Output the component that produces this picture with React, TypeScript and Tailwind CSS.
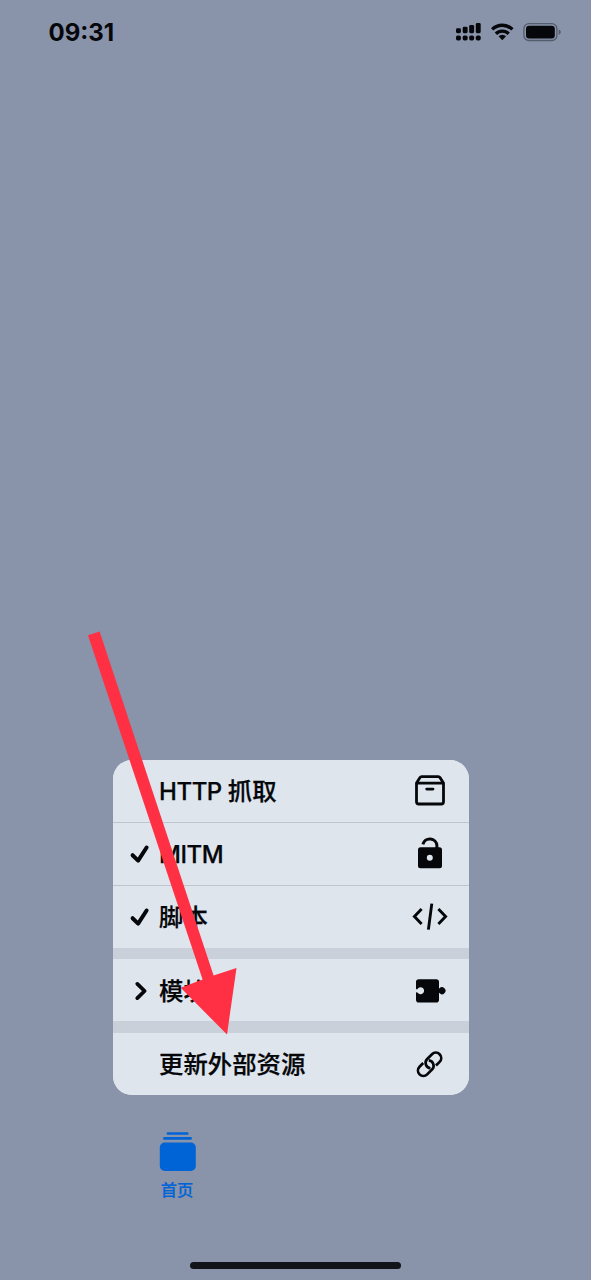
import type { ReactNode } from "react";

const BoxIcon = () => (
  <svg className="size-10" viewBox="0 0 40 40" fill="none" stroke="#05070a" strokeWidth="2.8" strokeLinejoin="round" strokeLinecap="round">
    <path d="M6.5 12.1 10 6.6Q10.6 5.7 11.6 5.7H28.4Q29.4 5.7 30 6.6L33.5 12.1V30.8Q33.5 33 31.3 33H8.7Q6.5 33 6.5 30.8ZM6.5 12.1H33.5" />
    <path d="M16.7 18.1H23" />
  </svg>
);

const LockIcon = () => (
  <svg className="size-10" viewBox="0 0 40 40">
    <path d="M12.9 10.4A7.1 7.1 0 0 1 26.9 11.6V15" fill="none" stroke="#05070a" strokeWidth="3" />
    <path fill="#05070a" fillRule="evenodd" d="M10.5 13.3H29.5Q32 13.3 32 15.8V31.7Q32 34.2 29.5 34.2H10.5Q8 34.2 8 31.7V15.8Q8 13.3 10.5 13.3ZM19.8 20.7A3 3 0 1 0 19.8 26.7A3 3 0 1 0 19.8 20.7Z" />
  </svg>
);

const CodeIcon = () => (
  <svg className="size-10" viewBox="0 0 40 40" fill="none" stroke="#05070a" strokeWidth="2.9">
    <path d="M11.6 12 4.4 19.5 11.6 27M28.4 12 35.6 19.5 28.4 27M21.8 6.6 18.4 32.6" />
  </svg>
);

const PuzzleIcon = () => (
  <svg className="size-10" viewBox="0 0 40 40" fill="#05070a">
    <path d="M8.8 8.2H26.2Q29 8.2 29 11V17.6Q29.2 17.8 29.4 17.3A3.5 3.5 0 1 1 29.4 22.1Q29.2 21.6 29 21.8V28.7Q29 31.5 26.2 31.5H8.8Q6 31.5 6 28.7V21.5Q6.4 20.8 7.7 21.7A3.5 3.5 0 1 0 7.7 17.7Q6.4 18.6 6 17.9V11Q6 8.2 8.8 8.2Z" />
  </svg>
);

const LinkIcon = () => (
  <svg className="size-10" viewBox="0 0 40 40" fill="none" stroke="#05070a" strokeWidth="2.7">
    <g transform="translate(19.6 20.3) rotate(-45)">
      <path d="M3.6 5.4H8.8A5.4 5.4 0 0 0 8.8-5.4H2A5.4 5.4 0 0 0-2.2 3.4" />
      <path d="M-3.6-5.4H-8.8A5.4 5.4 0 0 0-8.8 5.4H-2A5.4 5.4 0 0 0 2.2-3.4" />
    </g>
  </svg>
);

const Check = () => (
  <svg className="size-6" viewBox="0 0 24 24" fill="none" stroke="#05070a" strokeWidth="4" strokeLinecap="round" strokeLinejoin="round">
    <path d="M4.6 13.2 10.1 18.6 18.6 5.5" />
  </svg>
);

const Chevron = () => (
  <svg className="size-6" viewBox="0 0 24 24" fill="none" stroke="#05070a" strokeWidth="3.8" strokeLinecap="round" strokeLinejoin="round">
    <path d="M9.3 4.9 16.6 12 9.3 19.1" />
  </svg>
);

function Row({ label, latin, mark, icon }: { label?: string; latin?: string; mark?: ReactNode; icon: ReactNode }) {
  return (
    <div className="flex h-[62px] shrink-0 items-center bg-[#dfe5ed] pr-[19px] pl-[15px] text-[24.4px] font-medium text-[#05070a]">
      <span className="flex w-[31px] shrink-0">{mark}</span>
      <span className="flex-1 leading-[34px] whitespace-pre [-webkit-text-stroke:0.25px_#05070a]">
        {latin && <span className="text-[24px] tracking-[-0.45px]">{latin}</span>}
        {label}
      </span>
      {icon}
    </div>
  );
}

export default function App() {
  return (
    <div className="relative flex h-[1280px] w-[591px] flex-col overflow-hidden bg-[#8993a9] font-['Inter','Noto_Sans_CJK_SC',sans-serif]">
      <header className="flex h-16 shrink-0 items-center justify-between pr-[30px] pl-[48.5px]">
        <time className="pt-0.5 text-[24px] leading-none font-bold text-[#05070a]">09:31</time>
        <div className="flex items-center gap-[9px]">
          <svg className="h-5 w-[26px]" viewBox="0 0 26 20" fill="#05070a">
            <rect x="0" y="6.2" width="4.9" height="5" rx="1.4" />
            <rect x="6.7" y="4.7" width="4.9" height="6.5" rx="1.4" />
            <rect x="13.2" y="2.9" width="4.9" height="8.3" rx="1.4" />
            <rect x="19.8" y="1" width="4.9" height="10.2" rx="1.4" />
            <rect x="0" y="13.6" width="4.9" height="4.9" rx="1.7" />
            <rect x="6.7" y="13.6" width="4.9" height="4.9" rx="1.7" />
            <rect x="13.2" y="13.6" width="4.9" height="4.9" rx="1.7" />
            <rect x="19.8" y="13.6" width="4.9" height="4.9" rx="1.7" />
          </svg>
          <svg className="h-5 w-[23px]" viewBox="0 0 23 20" fill="none" stroke="#05070a" strokeWidth="3.4">
            <path d="M1.2 7.4A14.4 14.4 0 0 1 21.4 7.4M4.9 11.8A9 9 0 0 1 17.7 11.8" />
            <path d="M7.6 14.3A5.3 5.3 0 0 1 15 14.3L11.3 18.2Z" fill="#05070a" stroke="none" />
          </svg>
          <svg className="h-5 w-[38px]" viewBox="0 0 38 20">
            <rect x="0.9" y="1.7" width="33" height="16.8" rx="5" fill="none" stroke="#535c6d" strokeWidth="1.3" />
            <rect x="3" y="3.8" width="28.8" height="12.6" rx="3.2" fill="#05070a" />
            <path d="M35.7 7.2Q37.8 8.2 37.8 10.1T35.7 13Z" fill="#535c6d" />
          </svg>
        </div>
      </header>

      <div className="grow" />

      <nav className="mb-[37px] ml-[113px] flex w-[356px] shrink-0 flex-col overflow-hidden rounded-[19px] bg-[#dfe5ed]">
        <Row latin="HTTP " label="抓取" icon={<BoxIcon />} />
        <div className="h-px bg-[#bec5ce]" />
        <Row latin="MITM" mark={<Check />} icon={<LockIcon />} />
        <div className="h-px bg-[#bec5ce]" />
        <Row label="脚本" mark={<Check />} icon={<CodeIcon />} />
        <div className="h-[11px] bg-[#cad0d9]" />
        <div className="-mb-px pt-px">
          <Row label="模块" mark={<Chevron />} icon={<PuzzleIcon />} />
        </div>
        <div className="h-[12px] bg-[#cad0d9]" />
        <Row label="更新外部资源" icon={<LinkIcon />} />
      </nav>

      <footer className="flex h-[148px] shrink-0 flex-col">
        <div className="ml-[147px] flex w-[60px] flex-col items-center text-[#0064d6]">
          <svg className="h-10 w-[38px]" viewBox="0 0 38 40" fill="currentColor">
            <rect x="8.6" y="0.2" width="22" height="2.6" rx="1.3" />
            <rect x="5.1" y="5.1" width="28.8" height="2.6" rx="1.3" />
            <rect x="1.8" y="10.5" width="36" height="28.4" rx="5" />
          </svg>
          <span className="mt-[7px] text-[16.3px] leading-[22px] font-medium [-webkit-text-stroke:0.2px_#0064d6]">首页</span>
        </div>
        <div className="mx-auto mt-auto mb-[11px] h-[7px] w-[211px] rounded-full bg-[#111419]" />
      </footer>

      <svg className="pointer-events-none absolute top-0 left-0 h-[1280px] w-[591px]" viewBox="0 0 591 1280">
        <path d="M88 635.3 99.6 631.5 213.6 975.6 236.5 968 227 1034.5 180.7 987.8 202.6 979.6Z" fill="#ff3044" />
      </svg>
    </div>
  );
}
